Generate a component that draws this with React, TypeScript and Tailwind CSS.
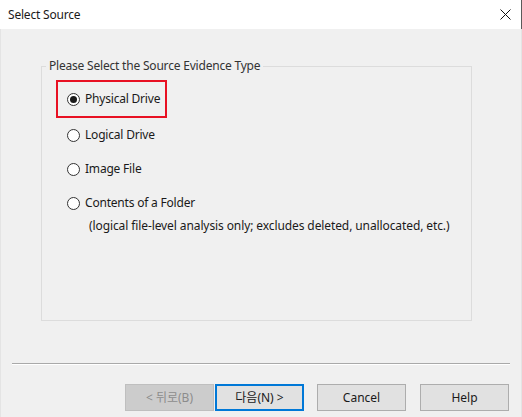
import { useState } from 'react';

interface SourceOption {
  id: string;
  label: string;
  note?: string;
}

const options: SourceOption[] = [
  { id: 'physical', label: 'Physical Drive' },
  { id: 'logical', label: 'Logical Drive' },
  { id: 'image', label: 'Image File' },
  { id: 'folder', label: 'Contents of a Folder', note: '(logical file-level analysis only; excludes deleted, unallocated, etc.)' },
];

function Radio({ checked }: { checked: boolean }) {
  return (
    <span className="flex h-[13px] w-[13px] shrink-0 items-center justify-center rounded-full border border-[#333] bg-white">
      {checked && <span className="h-[7px] w-[7px] rounded-full bg-[#1a1a1a]" />}
    </span>
  );
}

export default function App() {
  const [selected, setSelected] = useState('physical');

  return (
    <div
      className="flex h-[417px] w-[522px] flex-col bg-[#f0f0f0] text-[12px] text-[#1a1a1a]"
      style={{ fontFamily: '"Noto Sans", "Noto Sans CJK KR", sans-serif' }}
    >
      <div className="flex h-[29px] shrink-0 items-center justify-between border-r border-[#5a5a5a] bg-white pl-[8px] pr-[10px]">
        <span className="leading-none tracking-[-0.2px]">Select Source</span>
        <svg width="11" height="11" viewBox="0 0 11 11">
          <path d="M0.5 0.5 L10.5 10.5 M10.5 0.5 L0.5 10.5" stroke="#111" strokeWidth="1" />
        </svg>
      </div>

      <div className="flex flex-1 flex-col border-x border-[#e4e4e4]">
        <div className="relative ml-[40px] mt-[37px] h-[255px] w-[431px] border border-[#dcdcdc]">
          <span className="absolute left-[4px] top-[-9px] bg-[#f0f0f0] px-[3px] leading-[16px] tracking-[-0.2px] text-[#333]">
            Please Select the Source Evidence Type
          </span>

          <div className="flex flex-col pl-[14px] pt-[13px]">
            {options.map((opt) => {
              const checked = selected === opt.id;
              return (
                <div key={opt.id} className="flex flex-col">
                  <button
                    type="button"
                    onClick={() => setSelected(opt.id)}
                    className={
                      checked
                        ? 'flex h-[38px] w-[111px] items-center gap-[5px] border-2 border-[#e81123] pl-[9px] text-left'
                        : 'flex h-[34px] items-center gap-[5px] pl-[11px] text-left'
                    }
                  >
                    <Radio checked={checked} />
                    <span className="whitespace-nowrap leading-none tracking-[-0.2px]">{opt.label}</span>
                  </button>
                  {opt.note && (
                    <span className="ml-[33px] mt-[-2px] whitespace-nowrap leading-[16px] tracking-[-0.1px]">
                      {opt.note}
                    </span>
                  )}
                </div>
              );
            })}
          </div>
        </div>

        <div className="mx-[11px] mt-[42px] h-[2px] border-b border-t border-b-white border-t-[#a9a9a9]" />

        <div className="ml-[124px] mt-[19px] flex">
          <button
            type="button"
            disabled
            className="h-[27px] w-[89px] border border-[#bfbfbf] bg-[#cccccc] text-[#8c8c8c]"
          >
            &lt; 뒤로(B)
          </button>
          <button
            type="button"
            className="ml-[1px] h-[27px] w-[89px] border-2 border-[#0078d7] bg-[#e1e1e1]"
          >
            다음(N) &gt;
          </button>
          <button
            type="button"
            className="ml-[13px] h-[27px] w-[89px] border border-[#adadad] bg-[#e1e1e1]"
          >
            Cancel
          </button>
          <button
            type="button"
            className="ml-[14px] h-[27px] w-[89px] border border-[#adadad] bg-[#e1e1e1]"
          >
            Help
          </button>
        </div>
      </div>
    </div>
  );
}
